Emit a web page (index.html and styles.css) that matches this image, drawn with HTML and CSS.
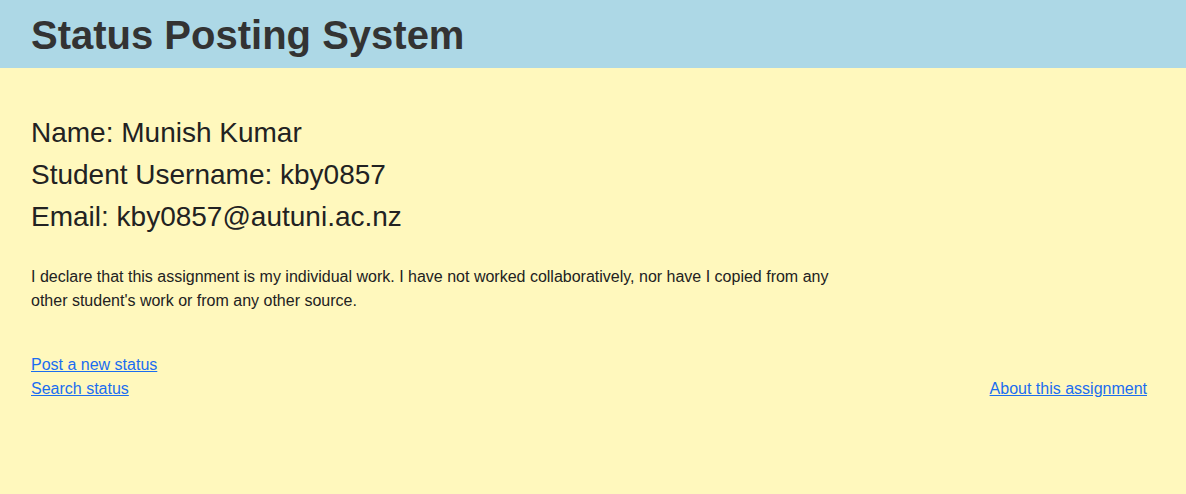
FILE: index.html
```html
<!DOCTYPE html>
<html lang="en">
<head>
<meta charset="utf-8">
<title>Status Posting System</title>
<link rel="stylesheet" href="styles.css">
</head>
<body>
<header class="site-header">
  <h1 class="site-title">Status Posting System</h1>
</header>
<main class="content">
  <section class="student-info">
    <p class="info-line">Name: Munish Kumar</p>
    <p class="info-line">Student Username: kby0857</p>
    <p class="info-line">Email: kby0857@autuni.ac.nz</p>
  </section>
  <p class="declaration">I declare that this assignment is my individual work. I have not worked collaboratively, nor have I copied from any other student's work or from any other source.</p>
  <nav class="links">
    <div class="links-left">
      <a href="#">Post a new status</a>
      <a href="#">Search status</a>
    </div>
    <a class="about-link" href="#">About this assignment</a>
  </nav>
</main>
</body>
</html>
```
FILE: styles.css
```css
html, body {
  margin: 0;
  padding: 0;
}
body {
  background: #fff8bd;
  font-family: "Liberation Sans", Arial, sans-serif;
  color: #222;
  min-height: 494px;
}
.site-header {
  background: #add8e6;
  height: 68px;
  display: flex;
  align-items: center;
  padding: 0 31px;
}
.site-title {
  margin: 0;
  font-size: 40px;
  font-weight: bold;
  color: #333;
  line-height: 1;
  padding-top: 1px;
}
.content {
  padding: 44px 39px 0 31px;
}
.student-info {
  margin: 0;
}
.info-line {
  margin: 0;
  font-size: 28px;
  line-height: 42px;
}
.declaration {
  margin: 27px 0 0;
  max-width: 810px;
  font-size: 16px;
  line-height: 24px;
}
.links {
  margin-top: 40px;
  display: flex;
  justify-content: space-between;
  align-items: flex-end;
}
.links-left {
  display: flex;
  flex-direction: column;
}
.links a {
  color: #1a6df0;
  font-size: 16px;
  line-height: 24px;
  text-decoration: underline;
}
```
